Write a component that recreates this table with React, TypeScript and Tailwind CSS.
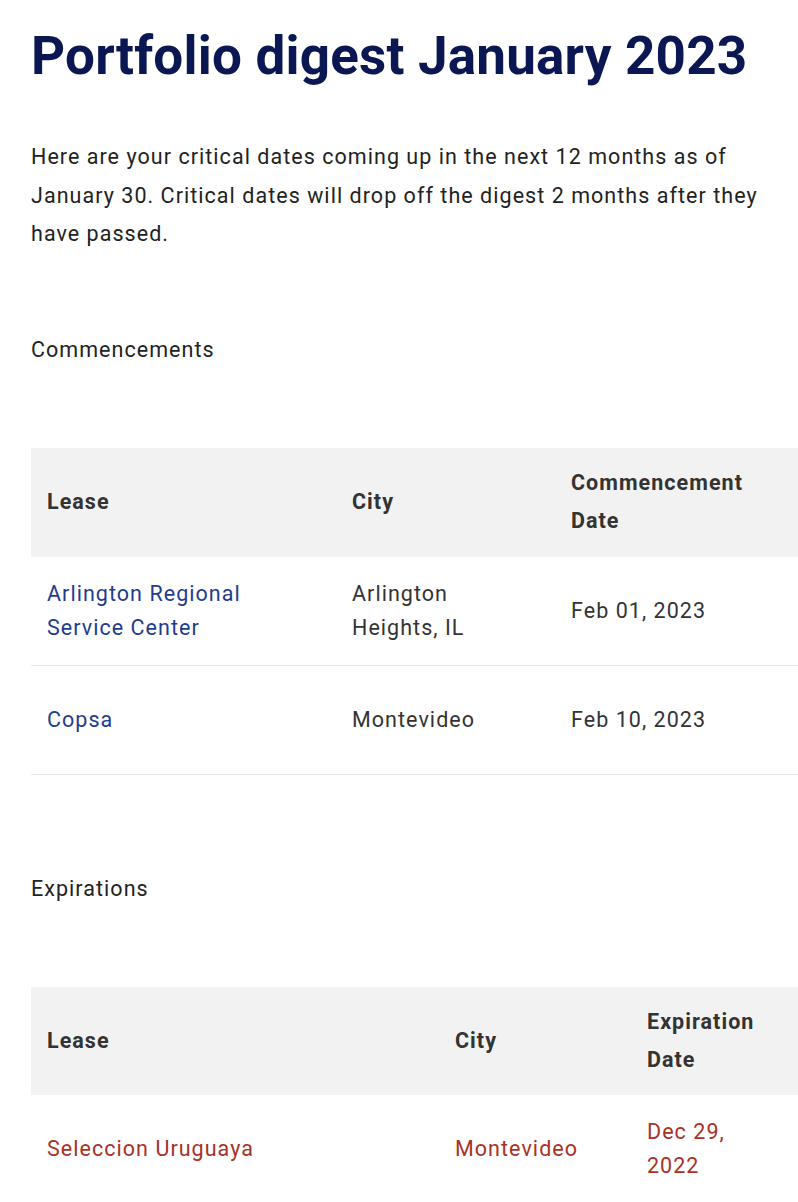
const commencements = [
  { lease: "Arlington Regional Service Center", city: "Arlington Heights, IL", date: "Feb 01, 2023" },
  { lease: "Copsa", city: "Montevideo", date: "Feb 10, 2023" },
];

const expirations = [
  { lease: "Seleccion Uruguaya", city: "Montevideo", date: "Dec 29, 2022" },
];

export default function App() {
  return (
    <div className="min-h-screen overflow-hidden bg-white pl-[31px] text-[#222] tracking-[0.065em] [font-family:Roboto,'Liberation_Sans',sans-serif]">
      <h1 className="pt-[22px] text-[53px] font-bold leading-[68px] tracking-[0.2px] text-[#0b1752]">
        Portfolio digest January 2023
      </h1>
      <p className="mt-[48px] w-[764px] text-[21.5px] leading-[38.5px]">
        Here are your critical dates coming up in the next 12 months as of January 30. Critical dates will drop off the
        digest 2 months after they have passed.
      </p>

      <h2 className="mt-[77px] text-[21.5px] leading-[38px]">Commencements</h2>
      <table className="mt-[79px] w-[767px] table-fixed border-collapse text-left text-[21.5px]">
        <colgroup>
          <col className="w-[305px]" />
          <col className="w-[219px]" />
          <col />
        </colgroup>
        <thead>
          <tr className="h-[109px] bg-[#f2f2f2] text-[#333]">
            <th className="px-4 font-bold leading-[38px]">Lease</th>
            <th className="px-4 font-bold leading-[38px]">City</th>
            <th className="pl-4 pr-[26px] font-bold leading-[38px]">Commencement Date</th>
          </tr>
        </thead>
        <tbody>
          {commencements.map((r) => (
            <tr key={r.lease} className="h-[109px] border-b border-[#e5e5e5] leading-[34px]">
              <td className="pl-4 pr-16 text-[#1f3c8f]">{r.lease}</td>
              <td className="pl-4 pr-16 text-[#333]">{r.city}</td>
              <td className="pl-4 pr-[26px] text-[#333]">{r.date}</td>
            </tr>
          ))}
        </tbody>
      </table>

      <h2 className="mt-[95px] text-[21.5px] leading-[38px]">Expirations</h2>
      <table className="mt-[79px] w-[767px] table-fixed border-collapse text-left text-[21.5px]">
        <colgroup>
          <col className="w-[408px]" />
          <col className="w-[192px]" />
          <col />
        </colgroup>
        <thead>
          <tr className="h-[108px] bg-[#f2f2f2] text-[#333]">
            <th className="px-4 font-bold leading-[38px]">Lease</th>
            <th className="px-4 font-bold leading-[38px]">City</th>
            <th className="pl-4 pr-[26px] font-bold leading-[38px]">Expiration Date</th>
          </tr>
        </thead>
        <tbody>
          {expirations.map((r) => (
            <tr key={r.lease} className="h-[109px] border-b border-[#e5e5e5] leading-[34px] text-[#a83224]">
              <td className="px-4">{r.lease}</td>
              <td className="px-4">{r.city}</td>
              <td className="pl-4 pr-[26px]">{r.date}</td>
            </tr>
          ))}
        </tbody>
      </table>
    </div>
  );
}
